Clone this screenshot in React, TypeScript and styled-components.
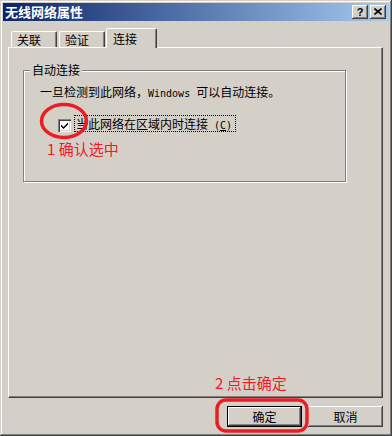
import React from "react";
import styled, { createGlobalStyle } from "styled-components";

const Global = createGlobalStyle`
  html, body { margin: 0; padding: 0; background: #d4d0c8; }
  body {
    font-family: "Noto Sans CJK SC", "Liberation Sans", sans-serif;
    font-size: 12px;
    color: #000;
  }
`;

const raised = `
  box-shadow: inset -1px -1px 0 #404040, inset 1px 1px 0 #ffffff,
    inset -2px -2px 0 #808080, inset 2px 2px 0 #d4d0c8;
`;

const Window = styled.div`
  position: relative;
  width: 392px;
  height: 436px;
  box-sizing: border-box;
  padding: 3px;
  background: #d4d0c8;
  box-shadow: inset -1px -1px 0 #404040, inset 1px 1px 0 #d4d0c8,
    inset -2px -2px 0 #808080, inset 2px 2px 0 #ffffff;
  display: flex;
  flex-direction: column;
`;

const TitleBar = styled.div`
  height: 18px;
  display: flex;
  align-items: center;
  justify-content: space-between;
  padding: 0 3px 0 2px;
  background: linear-gradient(to right, #0a246a, #a6caf0);
`;

const TitleText = styled.span`
  color: #fff;
  font-weight: bold;
  font-size: 13px;
  line-height: 18px;
`;

const CaptionButtons = styled.div`
  display: flex;
  gap: 2px;
`;

const CaptionButton = styled.div`
  width: 16px;
  height: 14px;
  box-sizing: border-box;
  background: #d4d0c8;
  ${raised}
  display: flex;
  align-items: center;
  justify-content: center;
  font-family: "Liberation Sans", sans-serif;
  font-weight: bold;
  font-size: 11px;
  line-height: 12px;
  padding-bottom: 1px;
`;

const Body = styled.div`
  flex: 1;
  display: flex;
  flex-direction: column;
  padding: 7px 6px 6px 5px;
`;

const TabRow = styled.div`
  display: flex;
  align-items: flex-end;
  height: 19px;
  padding-left: 3px;
`;

const Tab = styled.div<{ $active?: boolean; $w: number; $ml: number }>`
  position: relative;
  z-index: 1;
  box-sizing: border-box;
  width: ${(p) => p.$w}px;
  height: ${(p) => (p.$active ? 20 : 16)}px;
  margin-left: ${(p) => p.$ml}px;
  margin-bottom: ${(p) => (p.$active ? -1 : 0)}px;
  padding-left: ${(p) => (p.$active ? 6 : 5)}px;
  display: flex;
  align-items: center;
  background: #d4d0c8;
  border-top: 1px solid #fff;
  border-left: 1px solid #fff;
  border-right: 1px solid #404040;
  box-shadow: inset -1px 0 0 #808080;
  border-radius: 2px 2px 0 0;
  line-height: 12px;
`;

const Panel = styled.div`
  flex: 1;
  box-sizing: border-box;
  border-top: 1px solid #fff;
  border-left: 1px solid #fff;
  border-right: 1px solid #404040;
  border-bottom: 1px solid #404040;
  box-shadow: inset -1px -1px 0 #808080;
  padding: 22px 0 0 14px;
`;

const GroupBox = styled.div`
  width: 323px;
  height: 112px;
  box-sizing: border-box;
  border: 1px solid #808080;
  box-shadow: inset 1px 1px 0 #fff, 1px 1px 0 #fff;
`;

const GroupLabel = styled.div`
  width: fit-content;
  margin: -7px 0 0 6px;
  padding: 0 2px;
  line-height: 12px;
  background: #d4d0c8;
`;

const Desc = styled.div`
  margin: 10px 0 0 16px;
  line-height: 12px;
  white-space: nowrap;
`;

const Mono = styled.span`
  font-family: "DejaVu Sans Mono", "Noto Sans CJK SC", monospace;
  font-size: 10px;
`;

const CheckRow = styled.div`
  display: flex;
  align-items: flex-start;
  margin: 15px 0 0 34px;
  height: 18px;
`;

const CheckBox = styled.div`
  width: 13px;
  height: 13px;
  margin-top: 4px;
  box-sizing: border-box;
  background: #fff;
  box-shadow: inset 1px 1px 0 #808080, inset 2px 2px 0 #404040,
    inset -1px -1px 0 #fff, inset -2px -2px 0 #d4d0c8;
  display: flex;
  align-items: center;
  justify-content: center;
`;

const FocusLabel = styled.div`
  margin-left: 3px;
  height: 17px;
  box-sizing: border-box;
  border: 1px dotted #000;
  padding: 0 3px 0 1px;
  line-height: 15px;
  white-space: nowrap;
`;

const Underline = styled.span`
  text-decoration: underline;
`;

const ButtonRow = styled.div`
  display: flex;
  justify-content: flex-end;
  gap: 6px;
  margin-top: 8px;
`;

const Button = styled.div<{ $default?: boolean }>`
  width: 75px;
  height: 21px;
  box-sizing: border-box;
  display: flex;
  align-items: center;
  justify-content: center;
  background: #d4d0c8;
  line-height: 12px;
  ${(p) =>
    p.$default
      ? `border: 1px solid #000;
         box-shadow: inset -1px -1px 0 #404040, inset 1px 1px 0 #ffffff, inset -2px -2px 0 #808080;`
      : `box-shadow: inset -1px -1px 0 #404040, inset 1px 1px 0 #ffffff, inset -2px -2px 0 #808080;`}
`;

const Overlay = styled.div`
  position: absolute;
  inset: 0;
  pointer-events: none;
`;

const Mark = styled.svg<{ $x: number; $y: number }>`
  position: absolute;
  left: ${(p) => p.$x}px;
  top: ${(p) => p.$y}px;
  overflow: visible;
`;

const Note = styled.div<{ $x: number; $y: number }>`
  position: absolute;
  left: ${(p) => p.$x}px;
  top: ${(p) => p.$y}px;
  color: #ed1c24;
  font-size: 15px;
  line-height: 18px;
  white-space: nowrap;
`;

export default function App() {
  return (
    <>
      <Global />
      <Window>
        <TitleBar>
          <TitleText>无线网络属性</TitleText>
          <CaptionButtons>
            <CaptionButton>?</CaptionButton>
            <CaptionButton>
              <svg width="8" height="7" viewBox="0 0 8 7">
                <path d="M0.5 0.5 L7.5 6.5 M7.5 0.5 L0.5 6.5" stroke="#000" strokeWidth="1.6" />
              </svg>
            </CaptionButton>
          </CaptionButtons>
        </TitleBar>
        <Body>
          <TabRow>
            <Tab $w={46} $ml={0}>关联</Tab>
            <Tab $w={46} $ml={2}>验证</Tab>
            <Tab $w={51} $ml={1} $active>连接</Tab>
          </TabRow>
          <Panel>
            <GroupBox>
              <GroupLabel>自动连接</GroupLabel>
              <Desc>
                一旦检测到此网络，<Mono>Windows </Mono>可以自动连接。
              </Desc>
              <CheckRow>
                <CheckBox>
                  <svg width="7" height="7" viewBox="0 0 7 7">
                    <path d="M0 2.5 L2.5 5 L7 0.5 L7 2.5 L2.5 7 L0 4.5 Z" fill="#000" />
                  </svg>
                </CheckBox>
                <FocusLabel>
                  当此网络在区域内时连接<Mono> (<Underline>C</Underline>)</Mono>
                </FocusLabel>
              </CheckRow>
            </GroupBox>
          </Panel>
          <ButtonRow>
            <Button $default>确定</Button>
            <Button>取消</Button>
          </ButtonRow>
        </Body>
        <Overlay>
          <Mark $x={40} $y={103} width="48" height="36">
            <ellipse cx="24" cy="18" rx="22.5" ry="16.5" fill="none" stroke="#ed1c24" strokeWidth="3.5" />
          </Mark>
          <Note $x={47} $y={140}>1 确认选中</Note>
          <Note $x={215} $y={374}>2 点击确定</Note>
          <Mark $x={214} $y={397} width="96" height="37">
            <rect x="3" y="3" width="90" height="31" rx="9" fill="none" stroke="#ed1c24" strokeWidth="3.5" />
          </Mark>
        </Overlay>
      </Window>
    </>
  );
}
